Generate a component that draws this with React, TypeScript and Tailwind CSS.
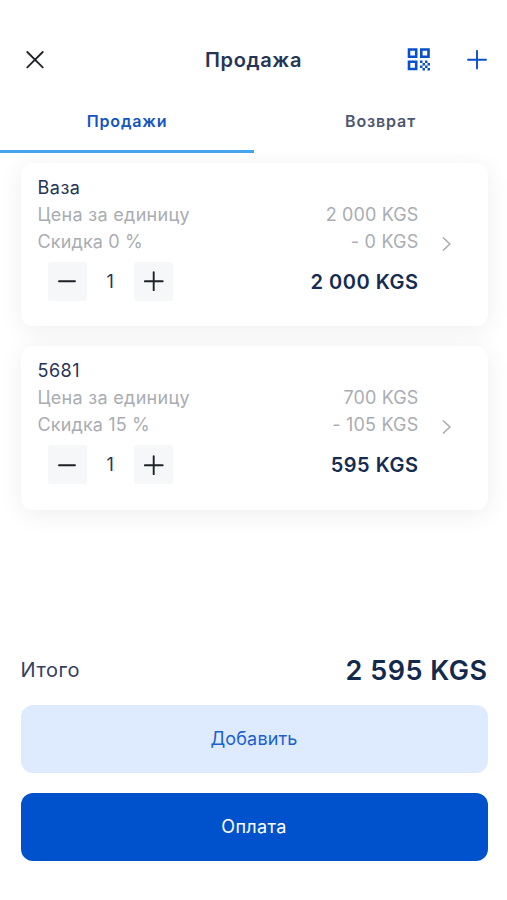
type Item = {
  name: string;
  price: string;
  discount: string;
  discountSum: string;
  total: string;
};

const items: Item[] = [
  { name: "Ваза", price: "2 000 KGS", discount: "Скидка 0 %", discountSum: "- 0 KGS", total: "2 000 KGS" },
  { name: "5681", price: "700 KGS", discount: "Скидка 15 %", discountSum: "- 105 KGS", total: "595 KGS" },
];

const QrIcon = () => (
  <svg width="24" height="24" viewBox="0 0 24 24" fill="none">
    <path
      d="M2 1.500h7.200v7.200H2zM14.300 1.500h7.200v7.200h-7.200zM2 13.800h7.200v7.200H2z"
      stroke="#0a50c8"
      strokeWidth="2.600"
    />
    <path
      d="M13 12.500h2.500v2.500H13zM18 12.500h2.500v2.500H18zM15.500 15H18v2.500h-2.500zM20.500 15H23v2.500h-2.500zM13 17.500h2.500v2.500H13zM18 17.500h2.500v2.500H18zM15.500 20H18v2.500h-2.500zM20.500 20H23v2.500h-2.500z"
      fill="#0a50c8"
    />
  </svg>
);

const Header = () => {
  return (
    <header className="grid h-[89px] grid-cols-[1fr_auto_1fr] items-end px-[19px] pb-[13.5px]">
      <button className="flex h-8 w-8 items-center justify-center">
        <svg width="18" height="18" viewBox="0 0 18 18" fill="none">
          <path d="M1.3 1l15.4 15.4M16.7 1L1.3 16.4" stroke="#1e2128" strokeWidth="1.8" strokeLinecap="round" />
        </svg>
      </button>
      <h1 className="text-[20px] leading-8 font-semibold tracking-[0.65px] text-[#263556]">Продажа</h1>
      <div className="flex items-center justify-end gap-[35px]">
        <button className="flex h-8 w-6 items-center justify-center">
          <QrIcon />
        </button>
        <button className="flex h-8 w-[22px] items-center justify-center">
          <svg width="20" height="20" viewBox="0 0 20 20" fill="none">
            <path d="M10 .9v17.600M1 9.700h18" stroke="#0a50c8" strokeWidth="1.9" strokeLinecap="round" />
          </svg>
        </button>
      </div>
    </header>
  );
};

const Tabs = () => {
  return (
    <nav className="flex h-[63.5px] text-[16px] font-semibold">
      <button className="w-[254px] border-b-[3px] border-[#45a4f0] pt-[4px] tracking-[0.85px] text-[#1455c0]">Продажи</button>
      <button className="flex-1 pt-px tracking-[0.85px] text-[#4d5870]">Возврат</button>
    </nav>
  );
};

const Counter = () => (
  <div className="ml-[10px] flex items-center">
    <button className="flex h-[39px] w-[39px] items-center justify-center rounded-[3px] bg-[#f5f7f8]">
      <svg width="20" height="20" viewBox="0 0 20 20" fill="none">
        <path d="M2 10.300h16" stroke="#1e2128" strokeWidth="1.9" strokeLinecap="round" />
      </svg>
    </button>
    <span className="w-[47.5px] text-center text-[18px] text-[#263556]">1</span>
    <button className="flex h-[39px] w-[39px] items-center justify-center rounded-[3px] bg-[#f5f7f8]">
      <svg width="20" height="20" viewBox="0 0 20 20" fill="none">
        <path d="M9.700 1.300v18M.9 10.300h17.800" stroke="#1e2128" strokeWidth="1.9" strokeLinecap="round" />
      </svg>
    </button>
  </div>
);

const ItemCard = ({ item }: { item: Item }) => {
  return (
    <article className="flex h-[163.5px] rounded-[12px] bg-white pt-[11px] pl-[17px] shadow-[0_4px_26px_rgba(0,0,0,0.07)]">
      <div className="w-[381px] text-[18px] leading-[27px] tracking-[0.3px] text-[#a9adb3]">
        <p className="tracking-[0.5px] text-[#263556]">{item.name}</p>
        <div className="flex justify-between">
          <span>Цена за единицу</span>
          <span className="tracking-[0.12px]">{item.price}</span>
        </div>
        <div className="flex justify-between">
          <span className="tracking-[0.15px]">{item.discount}</span>
          <span className="tracking-[0.2px]">{item.discountSum}</span>
        </div>
        <div className="mt-[7px] flex items-center justify-between">
          <Counter />
          <span className="relative top-px text-[20px] font-semibold tracking-[0.5px] text-[#152c52]">{item.total}</span>
        </div>
      </div>
      <svg className="mt-[62px] ml-[23px]" width="10" height="16" viewBox="0 0 10 16" fill="none">
        <path d="M1.5 2L8 8l-6.500 6" stroke="#a9adb3" strokeWidth="1.700" strokeLinecap="round" strokeLinejoin="round" />
      </svg>
    </article>
  );
};

const App = () => {
  return (
    <div className="flex h-[900px] w-[507px] flex-col overflow-hidden bg-white font-['Inter',sans-serif]">
      <Header />
      <Tabs />
      <main className="flex flex-1 flex-col gap-5 overflow-hidden pt-[10px] pr-[19.5px] pl-[20.5px]">
        {items.map((item) => (
          <ItemCard key={item.name} item={item} />
        ))}
      </main>
      <footer className="pr-[19.5px] pb-[39.5px] pl-[20.5px]">
        <div className="flex h-[54px] items-center justify-between">
          <span className="text-[20px] tracking-[0.55px] text-[#344060]">Итого</span>
          <span className="pt-[3px] text-[27px] font-semibold tracking-[0.5px] text-[#142a4d]">2 595 KGS</span>
        </div>
        <button className="mt-[8px] h-[68px] w-full rounded-[12px] bg-[#deebff] pb-px text-[18px] tracking-[0.15px] text-[#1c5fcd]">
          Добавить
        </button>
        <button className="mt-5 h-[68px] w-full rounded-[12px] bg-[#0052cc] pb-px text-[18px] tracking-[0.35px] text-white">
          Оплата
        </button>
      </footer>
    </div>
  );
};

export default App;
